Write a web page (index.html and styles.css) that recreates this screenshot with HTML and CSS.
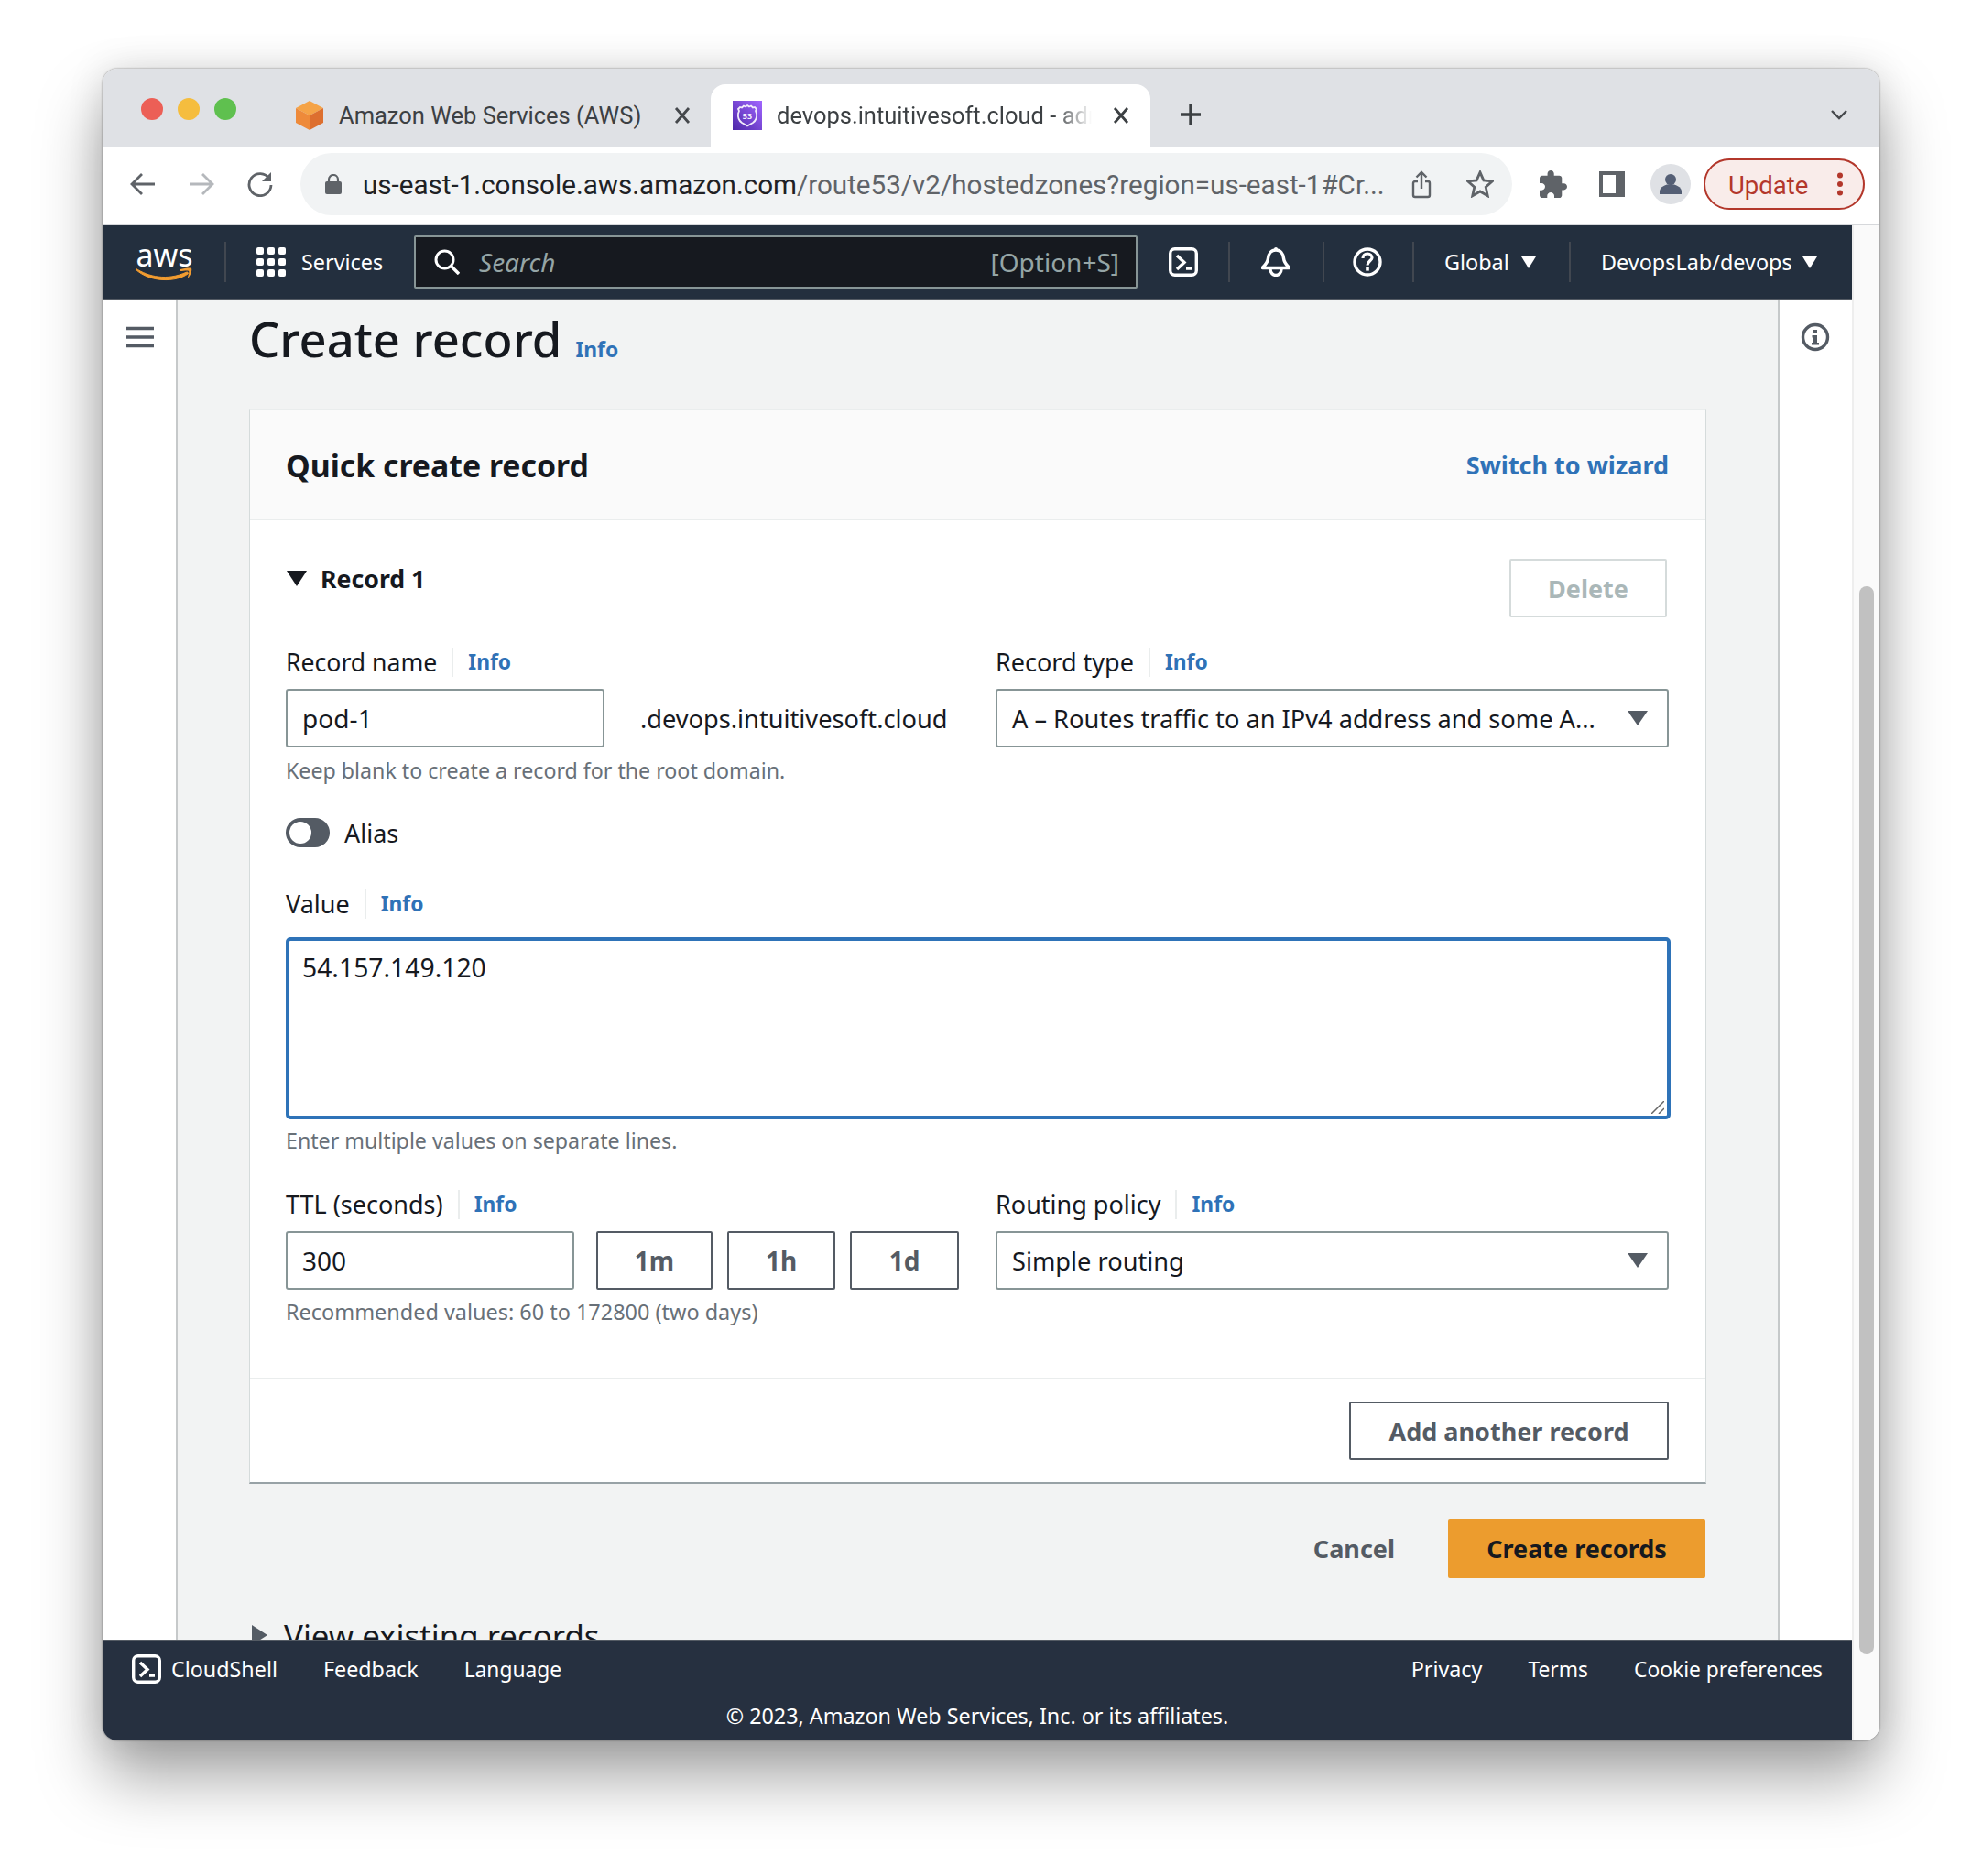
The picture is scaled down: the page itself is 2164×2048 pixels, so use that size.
FILE: index.html
```html
<!DOCTYPE html>
<html lang="en">
<head>
    <meta charset="UTF-8">
    <title>Create record - Route 53</title>
    <link rel="stylesheet" href="styles.css">
</head>
<body>
<div class="window">

    <div class="tabstrip">
        <div class="lights">
            <span class="light red"></span>
            <span class="light yellow"></span>
            <span class="light green"></span>
        </div>
        <div class="tab tab-first">
            <svg class="favicon" viewBox="0 0 32 32">
                <polygon points="16,0 31,8 16,16 1,8" fill="#f5a347"/>
                <polygon points="1,8 16,16 16,32 1,24" fill="#ee8a3a"/>
                <polygon points="16,16 31,8 31,24 16,32" fill="#dd6f2f"/>
            </svg>
            <span class="tab-title">Amazon Web Services (AWS)</span>
            <svg class="tab-close" viewBox="0 0 18 18"><path d="M2 1l14 16M16 1L2 17" stroke="#45484c" stroke-width="2.8" fill="none"/></svg>
        </div>
        <div class="tab tab-active">
            <svg class="favicon" viewBox="0 0 32 32">
                <defs>
                    <linearGradient id="r53" x1="0" y1="1" x2="1" y2="0">
                        <stop offset="0" stop-color="#4d27a8"/>
                        <stop offset="1" stop-color="#a166ff"/>
                    </linearGradient>
                </defs>
                <rect width="32" height="32" fill="url(#r53)"/>
                <path d="M16 5l2 1.500 2-1 2 2 2-.5 2 2-1 2 1 3c.5 4-1 8-4 10l-6 3.500L10 24c-3-2-4.500-6-4-10l1-3-1-2 2-2 2 .5 2-2 2 1z" fill="none" stroke="#f1ebfb" stroke-width="1.800"/>
                <text class="r53-text" x="16" y="20" text-anchor="middle">53</text>
            </svg>
            <span class="tab-title tab-fade">devops.intuitivesoft.cloud - adm</span>
            <svg class="tab-close" viewBox="0 0 18 18"><path d="M2 1l14 16M16 1L2 17" stroke="#3c4043" stroke-width="2.8" fill="none"/></svg>
        </div>
        <svg class="new-tab" viewBox="0 0 24 24"><path d="M12 1v22M1 12h22" stroke="#3c4043" stroke-width="3.4" fill="none"/></svg>
        <svg class="tab-list" viewBox="0 0 20 12"><path d="M2 2l8 8 8-8" stroke="#45484c" stroke-width="2.4" fill="none"/></svg>
    </div>

    <div class="toolbar">
        <svg class="tb-arrow" viewBox="0 0 28 26"><path d="M27 13H3M13 2L2 13l11 11" stroke="#5f6368" stroke-width="2.8" fill="none"/></svg>
        <svg class="tb-arrow tb-forward" viewBox="0 0 28 26"><path d="M1 13h24M15 2l11 11-11 11" stroke="#b5b8bc" stroke-width="2.8" fill="none"/></svg>
        <svg class="tb-reload" viewBox="0 0 28 28"><path d="M24 8A12 12 0 1 0 26 15" stroke="#5f6368" stroke-width="2.8" fill="none"/><path d="M26 1v10H16z" fill="#5f6368"/></svg>
        <div class="omnibox">
            <svg class="lock" viewBox="0 0 18 22"><path d="M4 9V6a5 5 0 0 1 10 0v3" stroke="#5f6368" stroke-width="2.2" fill="none"/><rect y="8" width="18" height="14" rx="2" fill="#5f6368"/></svg>
            <span class="url"><span class="url-host">us-east-1.console.aws.amazon.com</span>/route53/v2/hostedzones?region=us-east-1#Cr...</span>
            <svg class="share" viewBox="0 0 24 32"><path d="M8 13H5a2 2 0 0 0-2 2v13a2 2 0 0 0 2 2h14a2 2 0 0 0 2-2V15a2 2 0 0 0-2-2h-3M12 21V3M6.500 8.500L12 3l5.500 5.500" stroke="#5f6368" stroke-width="2.4" fill="none"/></svg>
            <svg class="star" viewBox="1 1 28 28"><path d="M15 3l3.600 8.200 8.900.9-6.700 6 1.900 8.800L15 22.400 7.300 26.900l1.900-8.800-6.700-6 8.900-.9z" stroke="#5f6368" stroke-width="2.600" fill="none"/></svg>
        </div>
        <svg class="puzzle" viewBox="2 1 21 21"><path d="M20.500 11H19V7c0-1.100-.9-2-2-2h-4V3.500C13 2.120 11.880 1 10.500 1S8 2.120 8 3.500V5H4c-1.100 0-1.990.9-1.990 2v3.800H3.500c1.490 0 2.700 1.210 2.700 2.700s-1.210 2.700-2.700 2.700H2V20c0 1.100.9 2 2 2h3.800v-1.500c0-1.490 1.210-2.700 2.700-2.700 1.490 0 2.700 1.210 2.700 2.700V22H17c1.100 0 2-.9 2-2v-4h1.500c1.380 0 2.500-1.120 2.500-2.500S21.880 11 20.500 11z" fill="#5f6368"/></svg>
        <svg class="side-panel" viewBox="0 0 28 28"><rect x="2" y="2" width="24" height="24" fill="none" stroke="#5f6368" stroke-width="4"/><rect x="18" y="2" width="8" height="24" fill="#5f6368"/></svg>
        <div class="avatar">
            <svg viewBox="0 0 44 44"><circle cx="22" cy="17" r="6" fill="#545f75"/><path d="M10 33v-3c0-5 7-8 12-8s12 3 12 8v3z" fill="#545f75"/></svg>
        </div>
        <div class="update">
            <span>Update</span>
            <svg viewBox="0 0 8 26"><circle cx="4" cy="3.500" r="3" fill="#b3372b"/><circle cx="4" cy="13" r="3" fill="#b3372b"/><circle cx="4" cy="22.500" r="3" fill="#b3372b"/></svg>
        </div>
    </div>

    <div class="page">
        <div class="console">

            <nav class="topnav">
                <div class="aws-logo">
                    <span class="aws-word">aws</span>
                    <svg viewBox="0 0 63 16"><path d="M0 2C14 11 34 16 56 6c1 0 2 1 1 2C45 17 16 18 0 3z" fill="#f29c30" stroke="#f29c30"/><path d="M49 3c4-1 10-2 12-1 1 2-1 8-4 11 0-3 2-7 1-8-1-1-6 0-9 0z" fill="#f29c30"/></svg>
                </div>
                <span class="nav-sep sep-logo"></span>
                <svg class="grid-icon" viewBox="0 0 32 32">
                    <rect width="8" height="8" rx="2"/><rect x="12" width="8" height="8" rx="2"/><rect x="24" width="8" height="8" rx="2"/>
                    <rect y="12" width="8" height="8" rx="2"/><rect x="12" y="12" width="8" height="8" rx="2"/><rect x="24" y="12" width="8" height="8" rx="2"/>
                    <rect y="24" width="8" height="8" rx="2"/><rect x="12" y="24" width="8" height="8" rx="2"/><rect x="24" y="24" width="8" height="8" rx="2"/>
                </svg>
                <span class="nav-services">Services</span>
                <div class="search">
                    <svg viewBox="0 0 28 28"><circle cx="11.500" cy="11.500" r="9.500" stroke="#fff" stroke-width="3" fill="none"/><path d="M18 18l9 9" stroke="#fff" stroke-width="3.400"/></svg>
                    <span class="search-text">Search</span>
                    <span class="search-key">[Option+S]</span>
                </div>
                <svg class="nav-icon nav-terminal" viewBox="0 0 32 32"><rect x="1.700" y="1.700" width="28.600" height="28.600" rx="5" fill="none" stroke="#fff" stroke-width="3.400"/><path d="M9 9l8 7.500-8 7.500M19 23h6" stroke="#fff" stroke-width="3.400" fill="none"/></svg>
                <span class="nav-sep sep-a"></span>
                <svg class="nav-icon nav-bell" viewBox="0 0 32 32"><path d="M16 3c-5 0-8 4-8.500 9-.5 5-3 7-6 10v.5h29v-.5c-3-3-5.500-5-6-10-.5-5-3.500-9-8.500-9z" stroke="#fff" stroke-width="3.400" fill="none" stroke-linejoin="round"/><circle cx="16" cy="2" r="2" fill="#fff"/><path d="M10 24c0 4 3 6.500 6 6.500s6-2.500 6-6.500" stroke="#fff" stroke-width="3.400" fill="none"/></svg>
                <span class="nav-sep sep-b"></span>
                <svg class="nav-icon nav-help" viewBox="0 0 32 32"><circle cx="16" cy="16" r="14" fill="none" stroke="#fff" stroke-width="3.400"/><path d="M11 12c0-3 2-5 5-5s5 2 5 4.500-5 4-5 8" stroke="#fff" stroke-width="3.200" fill="none"/><rect x="14.200" y="22" width="3.600" height="3.600" fill="#fff"/></svg>
                <span class="nav-sep sep-c"></span>
                <span class="nav-menu nav-global">Global</span>
                <span class="nav-caret"></span>
                <span class="nav-sep sep-d"></span>
                <span class="nav-menu nav-account">DevopsLab/devops</span>
                <span class="nav-caret"></span>
            </nav>

            <div class="content">
                <aside class="sidebar">
                    <svg viewBox="0 0 30 24"><path d="M0 2.500h30M0 12h30M0 21.500h30" stroke="#545b64" stroke-width="3.400"/></svg>
                </aside>

                <main class="main">
                    <div class="page-title">
                        <h1>Create record</h1>
                        <a class="info info-title">Info</a>
                    </div>

                    <section class="card">
                        <header class="card-header">
                            <h2>Quick create record</h2>
                            <a class="wizard-link">Switch to wizard</a>
                        </header>

                        <div class="card-body">
                            <div class="record-head">
                                <div class="record-title"><span class="caret-down"></span>Record 1</div>
                                <button class="btn btn-disabled">Delete</button>
                            </div>

                            <div class="two-cols">
                                <div>
                                    <div class="field-label"><span class="label-name">Record name</span><a class="info">Info</a></div>
                                    <div class="name-row">
                                        <input class="text-input name-input" value="pod-1">
                                        <span class="domain">.devops.intuitivesoft.cloud</span>
                                    </div>
                                    <p class="help">Keep blank to create a record for the root domain.</p>
                                </div>
                                <div>
                                    <div class="field-label"><span>Record type</span><a class="info">Info</a></div>
                                    <div class="select"><span>A – Routes traffic to an IPv4 address and some A...</span><i class="select-caret"></i></div>
                                </div>
                            </div>

                            <label class="alias">
                                <span class="toggle"><span class="knob"></span></span>
                                Alias
                            </label>

                            <div class="field-label value-label"><span>Value</span><a class="info">Info</a></div>
                            <div class="value-wrap">
                                <textarea class="value-box">54.157.149.120</textarea>
                                <svg class="grip" viewBox="0 0 14 14"><path d="M0 14L14 0M8 14l6-6" stroke="#666" stroke-width="1.500" fill="none"/></svg>
                            </div>
                            <p class="help help-value">Enter multiple values on separate lines.</p>

                            <div class="two-cols ttl-row">
                                <div>
                                    <div class="field-label"><span>TTL (seconds)</span><a class="info">Info</a></div>
                                    <div class="ttl-inputs">
                                        <input class="text-input ttl-input" value="300">
                                        <button class="btn btn-ttl btn-1m">1m</button>
                                        <button class="btn btn-ttl btn-1h">1h</button>
                                        <button class="btn btn-ttl btn-1d">1d</button>
                                    </div>
                                    <p class="help help-ttl">Recommended values: 60 to 172800 (two days)</p>
                                </div>
                                <div>
                                    <div class="field-label"><span>Routing policy</span><a class="info">Info</a></div>
                                    <div class="select"><span>Simple routing</span><i class="select-caret"></i></div>
                                </div>
                            </div>
                        </div>

                        <div class="card-footer">
                            <button class="btn btn-add">Add another record</button>
                        </div>
                    </section>

                    <div class="actions">
                        <a class="cancel">Cancel</a>
                        <button class="btn btn-primary">Create records</button>
                    </div>

                    <div class="existing"><span class="caret-right"></span>View existing records</div>
                </main>

                <aside class="helpbar">
                    <svg viewBox="0 0 32 32"><circle cx="16" cy="16" r="13.500" fill="none" stroke="#545b64" stroke-width="3.400"/><rect x="14" y="8" width="4" height="3.500" fill="#545b64"/><path d="M12.500 14H18v8h2v2.500h-8V22h2v-5.500h-1.500z" fill="#545b64"/></svg>
                </aside>
            </div>

            <footer class="footer">
                <div class="footer-links">
                    <svg class="shell-icon" viewBox="0 0 32 32"><rect x="1.700" y="1.700" width="28.600" height="28.600" rx="5" fill="none" stroke="#fff" stroke-width="3.400"/><path d="M9 9l8 7.500-8 7.500M19 23h6" stroke="#fff" stroke-width="3.400" fill="none"/></svg>
                    <a class="foot-shell">CloudShell</a>
                    <a>Feedback</a>
                    <a class="foot-small">Language</a>
                    <span class="foot-spacer"></span>
                    <a>Privacy</a>
                    <a class="foot-small">Terms</a>
                    <a class="foot-small">Cookie preferences</a>
                </div>
                <p class="copyright">© 2023, Amazon Web Services, Inc. or its affiliates.</p>
            </footer>
        </div>

        <div class="scrollbar"><div class="thumb"></div></div>
    </div>
</div>
</body>
</html>
```

FILE: styles.css
```css
* {
    box-sizing: border-box;
}
html, body {
    height: 2048px;
    margin: 0;
    overflow: hidden;
}
body {
    background: #fff;
    padding: 75px 0 0 112px;
    font-family: "Noto Sans", Arial, sans-serif;
    color: #16191f;
}
p, h1, h2 {
    margin: 0;
}
.window {
    width: 1940px;
    height: 1825px;
    border-radius: 16px;
    overflow: hidden;
    display: flex;
    flex-direction: column;
    background: #fff;
    box-shadow: 0 0 2px rgba(0,0,0,.5), 0 40px 70px rgba(0,0,0,.36), 0 0 40px rgba(0,0,0,.12);
}

/* browser chrome */
.tabstrip {
    height: 85px;
    background: #dfe1e5;
    display: flex;
    align-items: flex-end;
    font-family: Roboto, Arial, sans-serif;
    font-size: 25.5px;
    color: #3c4043;
}
.lights {
    display: flex;
    gap: 16px;
    margin: 0 0 29px 42px;
}
.light {
    width: 24px;
    height: 24px;
    border-radius: 50%;
}
.red { background: #ec5f56; }
.yellow { background: #f5bd3e; }
.green { background: #5fc04f; }
.tab {
    height: 68px;
    display: flex;
    align-items: center;
}
.tab-first {
    width: 488px;
    margin-left: 30px;
    padding-left: 34px;
}
.tab-active {
    width: 480px;
    padding-left: 24px;
    background: #fff;
    border-radius: 16px 16px 0 0;
}
.favicon {
    width: 32px;
    height: 32px;
    flex: none;
}
.r53-text {
    font-family: "Noto Sans", Arial, sans-serif;
    font-size: 9px;
    font-weight: 700;
    fill: #f1ebfb;
}
.tab-title {
    margin-left: 16px;
    white-space: nowrap;
    overflow: hidden;
}
.tab-first .tab-title {
    width: 350px;
}
.tab-fade {
    width: 344px;
    -webkit-mask-image: linear-gradient(to right, #000 88%, transparent 100%);
    mask-image: linear-gradient(to right, #000 88%, transparent 100%);
}
.tab-close {
    width: 18px;
    height: 18px;
    flex: none;
    margin-left: 23px;
}
.tab-first .tab-close {
    margin-left: 16px;
}
.new-tab {
    width: 24px;
    height: 24px;
    margin: 0 0 23px 32px;
}
.tab-list {
    width: 20px;
    height: 12px;
    margin: 0 34px 29px auto;
}
.toolbar {
    height: 86px;
    padding-bottom: 2px;
    border-bottom: 2px solid #d6d8db;
    display: flex;
    align-items: center;
    font-family: Roboto, Arial, sans-serif;
}
.tb-arrow {
    width: 28px;
    height: 26px;
    margin-left: 30px;
    flex: none;
}
.tb-forward {
    margin-left: 36px;
}
.tb-reload {
    width: 28px;
    height: 28px;
    margin-left: 36px;
    flex: none;
}
.omnibox {
    width: 1323px;
    height: 68px;
    margin-left: 30px;
    border-radius: 34px;
    background: #f1f3f4;
    display: flex;
    align-items: center;
    flex: none;
}
.lock {
    width: 18px;
    height: 22px;
    margin-left: 27px;
    flex: none;
}
.url {
    width: 1130px;
    margin-left: 23px;
    padding-top: 1px;
    font-size: 29.6px;
    color: #5f6368;
    white-space: nowrap;
    overflow: hidden;
}
.url-host {
    color: #202124;
}
.share {
    width: 24px;
    height: 32px;
    margin-left: 14px;
    flex: none;
}
.star {
    width: 30px;
    height: 30px;
    margin-left: 37px;
    flex: none;
}
.puzzle {
    width: 30px;
    height: 30px;
    margin-left: 30px;
    flex: none;
}
.side-panel {
    width: 28px;
    height: 28px;
    margin-left: 35px;
    flex: none;
}
.avatar {
    width: 44px;
    height: 44px;
    margin-left: 28px;
    border-radius: 50%;
    background: #dfe1e5;
    flex: none;
}
.avatar svg {
    display: block;
}
.update {
    width: 176px;
    height: 56px;
    margin-left: 14px;
    border: 2px solid #b3372b;
    border-radius: 28px;
    background: #f9ecea;
    display: flex;
    align-items: center;
    padding: 3px 0 0 25px;
    color: #b3372b;
    font-size: 27.5px;
    flex: none;
}
.update svg {
    width: 8px;
    height: 26px;
    margin: -3px 0 0 31px;
}

/* console */
.page {
    flex: 1;
    display: flex;
    min-height: 0;
}
.console {
    width: 1910px;
    display: flex;
    flex-direction: column;
}
.scrollbar {
    width: 30px;
    border-left: 2px solid #eeeeee;
    background: #fafafa;
    padding: 394px 6px 0 6px;
}
.thumb {
    width: 16px;
    height: 1166px;
    border-radius: 8px;
    background: #c1c1c1;
}
.topnav {
    height: 82px;
    background: #232f3e;
    border-bottom: 2px solid #545b64;
    display: flex;
    align-items: center;
    color: #fff;
    font-size: 23.4px;
}
.aws-logo {
    width: 63px;
    margin-left: 36px;
    flex: none;
}
.aws-word {
    display: block;
    height: 26px;
    line-height: 26px;
    font-size: 34px;
    text-align: center;
}
.aws-logo svg {
    display: block;
    width: 63px;
    height: 16px;
}
.nav-sep {
    width: 2px;
    height: 44px;
    background: #414750;
    flex: none;
}
.sep-logo { margin-left: 34px; }
.sep-a { margin-left: 33px; }
.sep-b { margin-left: 35px; }
.sep-c { margin-left: 33px; }
.sep-d { margin-left: 36px; }
.grid-icon {
    width: 32px;
    height: 32px;
    margin-left: 33px;
    fill: #fff;
    flex: none;
}
.nav-services {
    width: 90px;
    margin-left: 17px;
    white-space: nowrap;
}
.search {
    width: 790px;
    height: 58px;
    margin-left: 33px;
    border: 2px solid #879596;
    border-radius: 2px;
    background: #16191f;
    display: flex;
    align-items: center;
    padding: 0 18px 0 20px;
    color: #95a5a6;
    font-size: 28px;
    flex: none;
}
.search svg {
    width: 28px;
    height: 28px;
}
.search-text {
    margin-left: 21px;
    font-style: italic;
}
.search-key {
    margin-left: auto;
}
.nav-icon {
    width: 32px;
    height: 32px;
    flex: none;
}
.nav-terminal { margin-left: 34px; }
.nav-bell { margin-left: 34px; }
.nav-help { margin-left: 31px; }
.nav-menu {
    white-space: nowrap;
}
.nav-global {
    width: 72px;
    margin-left: 33px;
}
.nav-account {
    width: 208px;
    margin-left: 33px;
}
.nav-caret {
    width: 0;
    height: 0;
    margin-left: 12px;
    border-left: 8px solid transparent;
    border-right: 8px solid transparent;
    border-top: 13px solid #fff;
    flex: none;
}
.content {
    flex: 1;
    display: flex;
    min-height: 0;
    background: #f2f3f3;
}
.sidebar {
    width: 82px;
    background: #fff;
    border-right: 2px solid #c6c9ca;
    padding: 28px 0 0 26px;
    flex: none;
}
.sidebar svg {
    display: block;
    width: 30px;
    height: 24px;
}
.helpbar {
    width: 81px;
    background: #fff;
    border-left: 2px solid #c6c9ca;
    padding: 24px 0 0 23px;
    flex: none;
}
.helpbar svg {
    display: block;
    width: 32px;
    height: 32px;
}
.main {
    flex: 1;
    min-width: 0;
    padding: 15px 78px 0 78px;
    overflow: hidden;
}
.page-title {
    display: flex;
    align-items: baseline;
    height: 56px;
    margin-bottom: 48px;
}
.page-title h1 {
    font-size: 52.5px;
    line-height: 54px;
    font-weight: 500;
}
.info {
    color: #2f72b7;
    font-size: 22.8px;
    font-weight: 700;
}
.info-title {
    margin-left: 15px;
}

/* card */
.card {
    background: #fff;
    border: 1px solid #d5dbdb;
    border-top-color: #eaeded;
    border-bottom: 2px solid #98a2a6;
}
.card-header {
    height: 120px;
    padding: 0 40px 0 39px;
    background: #fafafa;
    border-bottom: 1px solid #eaeded;
    display: flex;
    justify-content: space-between;
    align-items: center;
}
.card-header h2 {
    font-size: 33.8px;
    font-weight: 700;
}
.wizard-link {
    color: #2f72b7;
    font-size: 27px;
    font-weight: 700;
}
.card-body {
    padding: 42px 39px 59px;
    border-bottom: 1px solid #eaeded;
}
.record-head {
    display: flex;
    justify-content: space-between;
    height: 96px;
}
.record-title {
    display: flex;
    align-items: center;
    height: 42px;
    font-size: 26.7px;
    font-weight: 700;
}
.caret-down {
    width: 0;
    height: 0;
    margin: 0 15px 0 1px;
    border-left: 11px solid transparent;
    border-right: 11px solid transparent;
    border-top: 17px solid #16191f;
}
.btn {
    font-family: inherit;
    font-weight: 700;
    font-size: 27px;
    background: #fff;
    border: 2px solid #545b64;
    border-radius: 2px;
    color: #545b64;
    padding: 0;
}
.btn-disabled {
    width: 172px;
    height: 64px;
    margin-right: 3px;
    border-color: #d5dbdb;
    color: #aab7b8;
}
.two-cols {
    display: grid;
    grid-template-columns: 735px 735px;
    column-gap: 40px;
}
.field-label {
    height: 32px;
    padding-top: 1px;
    margin-bottom: 14px;
    display: flex;
    align-items: center;
    font-size: 27px;
}
.label-name {
    font-size: 26.6px;
}
.field-label .info {
    margin-left: 16px;
    padding-left: 16px;
    border-left: 2px solid #eaeded;
    line-height: 32px;
}
.text-input {
    height: 64px;
    border: 2px solid #879596;
    border-radius: 3px;
    padding: 0 16px;
    font-family: inherit;
    font-size: 28px;
    color: #16191f;
    outline: none;
}
.name-row {
    display: flex;
    align-items: center;
}
.name-input {
    width: 348px;
}
.domain {
    margin-left: 39px;
    font-size: 27.2px;
    white-space: nowrap;
}
.help {
    margin-top: 12px;
    font-size: 23.2px;
    line-height: 26px;
    color: #687078;
}
.select {
    height: 64px;
    border: 2px solid #879596;
    border-radius: 3px;
    padding: 0 16px;
    display: flex;
    align-items: center;
    justify-content: space-between;
    font-size: 27.2px;
    white-space: nowrap;
}
.select-caret {
    width: 0;
    height: 0;
    margin-right: 5px;
    border-left: 11px solid transparent;
    border-right: 11px solid transparent;
    border-top: 16px solid #545b64;
}
.alias {
    display: flex;
    align-items: center;
    gap: 16px;
    height: 32px;
    margin-top: 39px;
    font-size: 27px;
}
.toggle {
    width: 48px;
    height: 32px;
    padding: 4px;
    border-radius: 16px;
    background: #545b64;
}
.knob {
    display: block;
    width: 24px;
    height: 24px;
    border-radius: 50%;
    background: #fff;
}
.value-label {
    margin-top: 45px;
    margin-bottom: 21px;
}
.value-wrap {
    position: relative;
}
.value-box {
    display: block;
    width: 1512px;
    height: 199px;
    border: 4px solid #2e73b8;
    border-radius: 5px;
    padding: 10px 14px;
    font-family: inherit;
    font-size: 28.3px;
    color: #16191f;
    outline: none;
    resize: none;
}
.grip {
    position: absolute;
    right: 6px;
    bottom: 6px;
    width: 14px;
    height: 14px;
}
.help-value {
    margin-top: 10px;
}
.ttl-row {
    margin-top: 40px;
}
.ttl-inputs {
    display: flex;
}
.ttl-input {
    width: 315px;
}
.btn-ttl {
    height: 64px;
    font-size: 28px;
}
.btn-1m { width: 127px; margin-left: 24px; }
.btn-1h { width: 118px; margin-left: 16px; }
.btn-1d { width: 119px; margin-left: 16px; }
.help-ttl {
    margin-top: 11px;
    font-size: 23.45px;
}
.card-footer {
    padding: 25px 40px 24px 39px;
    display: flex;
    justify-content: flex-end;
}
.btn-add {
    width: 349px;
    height: 64px;
}
.actions {
    display: flex;
    justify-content: flex-end;
    align-items: center;
    margin-top: 38px;
    padding-right: 1px;
}
.cancel {
    margin-right: 58px;
    color: #545b64;
    font-size: 27px;
    font-weight: 700;
}
.btn-primary {
    width: 281px;
    height: 65px;
    background: #ec9c2e;
    border: none;
    color: #16191f;
}
.existing {
    display: flex;
    align-items: center;
    margin-top: 40px;
    margin-left: 3px;
    height: 44px;
    font-size: 34.8px;
}
.caret-right {
    width: 0;
    height: 0;
    margin-right: 18px;
    border-top: 11px solid transparent;
    border-bottom: 11px solid transparent;
    border-left: 17px solid #545b64;
}

/* footer */
.footer {
    height: 110px;
    background: #263040;
    border-top: 2px solid #545b64;
    color: #fff;
    font-size: 23.3px;
    flex: none;
}
.footer-links {
    display: flex;
    align-items: center;
    height: 60px;
    padding: 0 32px;
    gap: 50px;
}
.foot-small {
    font-size: 22.8px;
}
.shell-icon {
    width: 32px;
    height: 32px;
    margin-right: -39px;
    flex: none;
}
.foot-spacer {
    flex: 1;
}
.copyright {
    margin-top: 8px;
    text-align: center;
    line-height: 26px;
}
```
